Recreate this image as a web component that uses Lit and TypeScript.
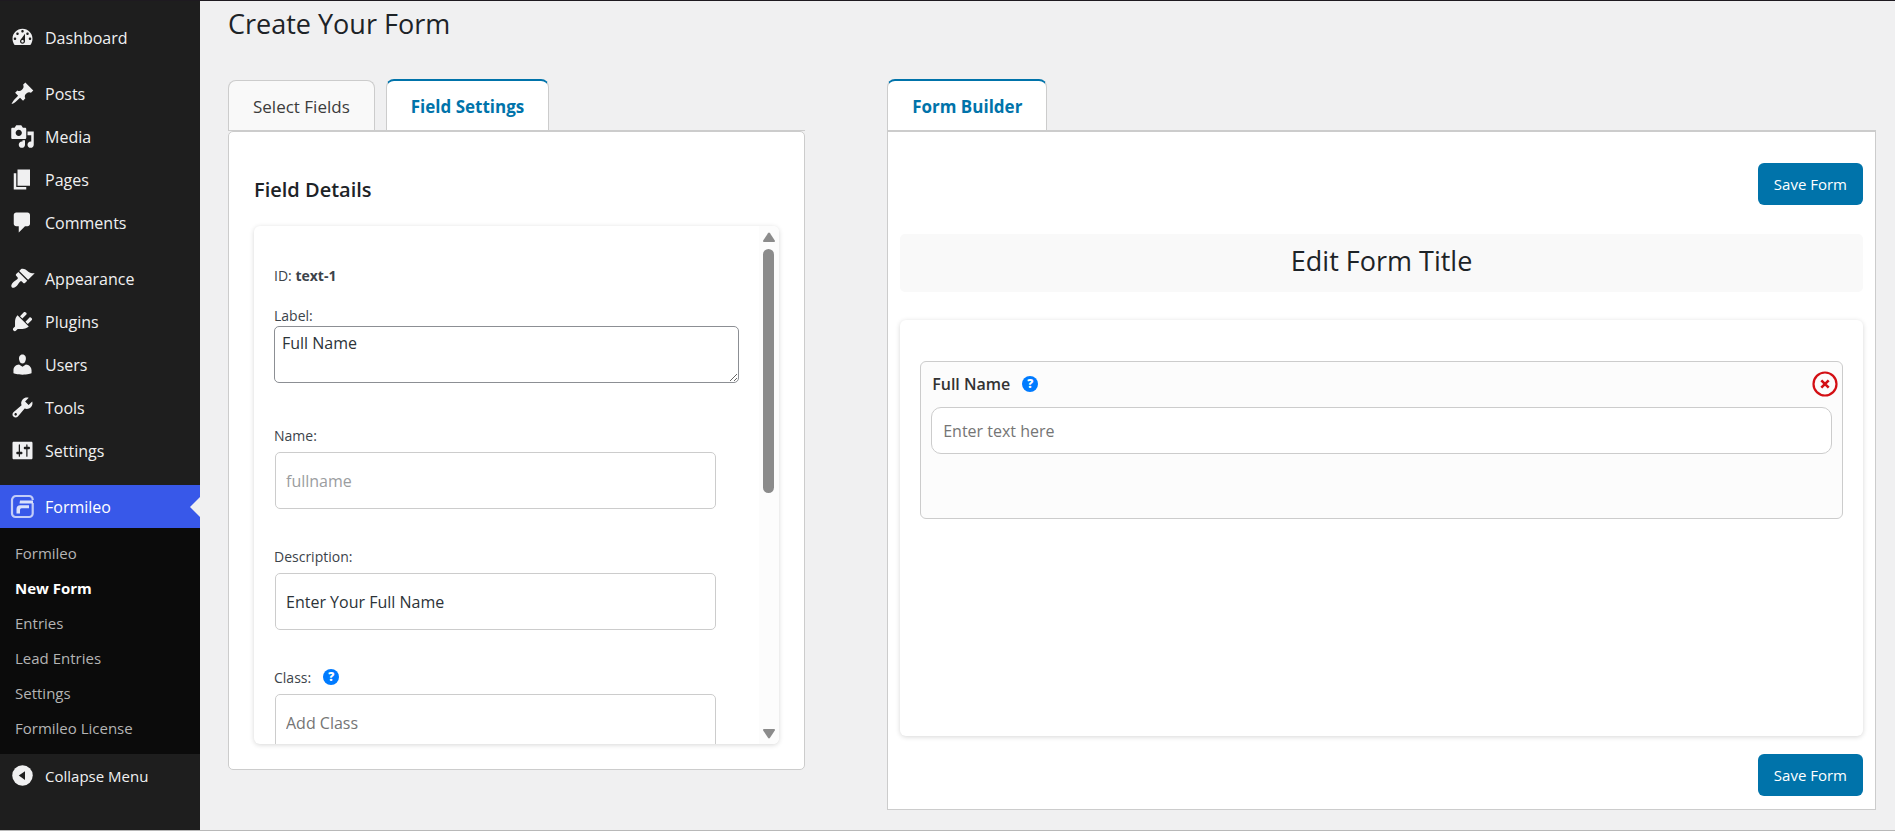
import { LitElement, html, css, svg } from "lit";
import { customElement, state } from "lit/decorators.js";
import { classMap } from "lit/directives/class-map.js";

interface MenuItem {
  label: string;
  path: string;
  first?: boolean;
}

const MENU: MenuItem[] = [
  {
    label: "Dashboard",
    path: "M3.76 16h12.48c1.1-1.37 1.76-3.11 1.76-5 0-4.42-3.58-8-8-8s-8 3.58-8 8c0 1.89.66 3.63 1.76 5zM10 4c.55 0 1 .45 1 1s-.45 1-1 1-1-.45-1-1 .45-1 1-1zM6 6c.55 0 1 .45 1 1s-.45 1-1 1-1-.45-1-1 .45-1 1-1zm8 0c.55 0 1 .45 1 1s-.45 1-1 1-1-.45-1-1 .45-1 1-1zm-5.37 5.55L12 7v6c0 1.1-.9 2-2 2s-2-.9-2-2c0-.57.24-1.08.63-1.45zM4 10c.55 0 1 .45 1 1s-.45 1-1 1-1-.45-1-1 .45-1 1-1zm12 0c.55 0 1 .45 1 1s-.45 1-1 1-1-.45-1-1 .45-1 1-1zm-5 3c0-.55-.45-1-1-1s-1 .45-1 1 .45 1 1 1 1-.45 1-1z",
  },
  {
    label: "Posts",
    first: true,
    path: "M10.44 3.02l1.82-1.82 6.36 6.35-1.83 1.82c-1.05-.68-2.48-.57-3.41.36l-.75.75c-.92.93-1.04 2.35-.35 3.41l-1.83 1.82-2.41-2.41-2.8 2.79c-.42.42-3.38 2.71-3.8 2.29s1.86-3.39 2.28-3.81l2.79-2.79L4.1 9.36l1.83-1.82c1.05.69 2.48.57 3.4-.36l.75-.75c.93-.92 1.05-2.35.36-3.41z",
  },
  {
    label: "Media",
    path: "M13 11V4c0-.55-.45-1-1-1h-1.67L9 1H5L3.67 3H2c-.55 0-1 .45-1 1v7c0 .55.45 1 1 1h10c.55 0 1-.45 1-1zM7 4.5c1.38 0 2.5 1.12 2.5 2.5S8.38 9.5 7 9.5 4.5 8.38 4.5 7 5.62 4.5 7 4.5zM14 6h5v10.5c0 1.38-1.12 2.5-2.5 2.5S14 17.88 14 16.5s1.12-2.5 2.5-2.5c.17 0 .34.02.5.05V9h-3V6zm-4 8.05V13h2v3.5c0 1.38-1.12 2.5-2.5 2.5S7 17.88 7 16.5 8.12 14 9.5 14c.17 0 .34.02.5.05z",
  },
  { label: "Pages", path: "M6 15V2h10v13H6zm-1 1h8v2H3V5h2v11z" },
  {
    label: "Comments",
    path: "M5 2h9c1.1 0 2 .9 2 2v7c0 1.1-.9 2-2 2h-2l-5 5v-5H5c-1.1 0-2-.9-2-2V4c0-1.1.9-2 2-2z",
  },
  {
    label: "Appearance",
    first: true,
    path: "M14.48 11.06L7.41 3.99l1.5-1.5c.5-.56 2.3-.47 3.51.32 1.21.8 1.43 1.28 2.91 2.1 1.18.64 2.45 1.26 4.45.85zm-.71.71L6.7 4.7 4.93 6.47c-.39.39-.39 1.02 0 1.41l1.06 1.06c.39.39.39 1.03 0 1.42-.6.6-1.43 1.11-2.21 1.69-.35.26-.7.53-1.01.84C1.43 14.23.4 16.08 1.4 17.07c.99 1 2.84-.03 4.18-1.36.31-.31.58-.66.85-1.02.57-.78 1.08-1.61 1.69-2.21.39-.39 1.02-.39 1.41 0l1.06 1.06c.39.39 1.02.39 1.41 0z",
  },
  {
    label: "Plugins",
    path: "M13.11 4.36L9.87 7.6 8 5.73l3.24-3.24c.35-.34 1.05-.2 1.56.32.52.51.66 1.21.31 1.55zm-8 1.77l.91-1.12 9.01 9.01-1.19.84c-.71.71-2.63 1.16-3.82 1.16H6.14L4.9 17.26c-.59.59-1.54.59-2.12 0-.59-.58-.59-1.53 0-2.12l1.24-1.24v-3.88c0-1.13.4-3.19 1.09-3.89zm7.26 3.97l3.24-3.24c.34-.35 1.04-.21 1.55.31.52.51.66 1.21.31 1.55l-3.24 3.25z",
  },
  {
    label: "Users",
    path: "M10 9.25c-2.27 0-2.73-3.44-2.73-3.44C7 4.02 7.82 2 9.97 2c2.16 0 2.98 2.02 2.71 3.81 0 0-.41 3.44-2.68 3.44zm0 2.57L12.72 10c2.39 0 4.52 2.33 4.52 4.53v2.49s-3.65 1.13-7.24 1.13c-3.65 0-7.24-1.13-7.24-1.13v-2.49c0-2.25 1.94-4.48 4.47-4.48z",
  },
  {
    label: "Tools",
    path: "M16.68 9.77c-1.34 1.34-3.3 1.67-4.95.99l-5.41 6.52c-.99.99-2.59.99-3.58 0s-.99-2.59 0-3.57l6.52-5.42c-.68-1.65-.35-3.61.99-4.95 1.28-1.28 3.12-1.62 4.72-1.06l-2.89 2.89 2.82 2.82 2.86-2.87c.53 1.58.18 3.39-1.08 4.65zM3.81 16.21c.4.39 1.04.39 1.43 0 .4-.4.4-1.04 0-1.43-.39-.4-1.03-.4-1.43 0-.39.39-.39 1.03 0 1.43z",
  },
  {
    label: "Settings",
    path: "M18 16V4c0-.55-.45-1-1-1H3c-.55 0-1 .45-1 1v12c0 .55.45 1 1 1h14c.55 0 1-.45 1-1zM8 11h1c.55 0 1 .45 1 1s-.45 1-1 1H8v1.5c0 .28-.22.5-.5.5s-.5-.22-.5-.5V13H6c-.55 0-1-.45-1-1s.45-1 1-1h1V5.5c0-.28.22-.5.5-.5s.5.22.5.5V11zm5-2h-1c-.55 0-1-.45-1-1s.45-1 1-1h1V5.5c0-.28.22-.5.5-.5s.5.22.5.5V7h1c.55 0 1 .45 1 1s-.45 1-1 1h-1v5.5c0 .28-.22.5-.5.5s-.5-.22-.5-.5V9z",
  },
];

const SUBMENU = ["Formileo", "New Form", "Entries", "Lead Entries", "Settings", "Formileo License"];

const shared = css`
  *,
  *::before,
  *::after {
    box-sizing: border-box;
  }
  a {
    color: inherit;
    text-decoration: none;
  }
  button,
  input,
  textarea {
    font-family: inherit;
    margin: 0;
  }
`;

@customElement("admin-menu")
export class AdminMenu extends LitElement {
  static styles = [
    shared,
    css`
      :host {
        display: block;
        background: #1e1e1e;
        color: #f0f0f1;
        padding-top: 15px;
        font-size: 16px;
      }
      .list {
        list-style: none;
        margin: 0;
        padding: 0;
      }
      .first {
        margin-top: 13px;
      }
      .item {
        display: flex;
        align-items: center;
        gap: 10px;
        width: 100%;
        height: 43px;
        padding: 0 10px;
        border: 0;
        background: none;
        color: inherit;
        text-align: left;
      }
      .icon {
        flex: none;
        width: 25px;
        height: 25px;
        fill: #f0f0f1;
      }
      .current {
        position: relative;
        background: #3858e9;
        color: #fff;
      }
      .current::after {
        content: "";
        position: absolute;
        right: 0;
        top: 50%;
        margin-top: -10px;
        border: 10px solid transparent;
        border-left-width: 0;
        border-right-color: #f0f0f1;
      }
      .sub {
        list-style: none;
        margin: 0;
        padding: 8px 0;
        background: #0b0b0b;
        color: #b4b4b4;
        font-size: 15px;
      }
      .sub-link {
        display: block;
        padding: 0 15px;
        line-height: 35px;
      }
      .active {
        color: #fff;
        font-weight: 700;
      }
      .collapse {
        font-size: 15px;
      }
    `,
  ];

  render() {
    return html`
      <nav aria-label="Main menu">
        <ul class="list">
          ${MENU.map(
            (m) => html`<li class=${classMap({ first: !!m.first })}>
              <a class="item" href="#">
                <svg class="icon" viewBox="0 0 20 20" aria-hidden="true">${svg`<path fill-rule="evenodd" d=${m.path} />`}</svg>
                <span>${m.label}</span>
              </a>
            </li>`
          )}
          <li class="first">
            <a class="item current" href="#">
              <svg class="icon" viewBox="0 0 25 25" aria-hidden="true">
                <path
                  d="M22.700 6V5.500a3.500 3.500 0 0 0-3.500-3.500H6a4 4 0 0 0-4 4v13.500a3.500 3.500 0 0 0 3.500 3.500h13.700a3.500 3.500 0 0 0 3.500-3.500V9"
                  fill="none"
                  stroke="#c3cdf8"
                  stroke-width="2.200"
                />
                <path d="M10 6.500h13v3H9.500z" fill="#dbe1fb" />
                <path d="M6.500 19.500V15a3.800 3.800 0 0 1 3.800-3.800H19v3h-7.500a1.500 1.500 0 0 0-1.500 1.500v3.800z" fill="#dbe1fb" />
              </svg>
              <span>Formileo</span>
            </a>
            <ul class="sub">
              ${SUBMENU.map(
                (s) => html`<li>
                  <a class=${classMap({ "sub-link": true, active: s === "New Form" })} href="#">${s}</a>
                </li>`
              )}
            </ul>
          </li>
        </ul>
        <button class="item collapse" type="button">
          <svg class="icon" viewBox="0 0 20 20" aria-hidden="true">
            <circle cx="10" cy="10" r="8.200" />
            <path d="M12 6.500v7L7 10z" fill="#1e1e1e" />
          </svg>
          <span>Collapse Menu</span>
        </button>
      </nav>
    `;
  }
}

@customElement("help-tip")
export class HelpTip extends LitElement {
  static styles = [
    shared,
    css`
      :host {
        display: inline-flex;
      }
      .tip {
        width: 16px;
        height: 16px;
        padding: 0;
        border: 0;
        border-radius: 50%;
        background: #007bff;
        color: #fff;
        font-size: 12px;
        font-weight: 800;
        line-height: 16px;
        text-align: center;
      }
    `,
  ];
  render() {
    return html`<button class="tip" type="button" aria-label="Help">?</button>`;
  }
}

@customElement("field-settings")
export class FieldSettings extends LitElement {
  static styles = [
    shared,
    css`
      :host {
        display: block;
      }
      .card {
        display: flex;
        height: 518px;
        border-radius: 6px;
        box-shadow: 0 1px 5px rgba(0, 0, 0, 0.16);
        overflow: hidden;
        background: #fff;
      }
      .scroller {
        flex: 1;
        overflow-y: auto;
        scrollbar-width: none;
        padding: 38px 20px 0;
        color: #3c434a;
        font-size: 14px;
      }
      .line {
        margin: 0 0 16px;
        line-height: 24px;
      }
      .group {
        display: grid;
        grid-template-columns: minmax(0, 1fr);
        height: 121px;
        grid-template-rows: 28px 57px;
      }
      .area-group {
        height: 120px;
        grid-template-rows: 22px 57px;
      }
      .caption {
        display: flex;
        align-items: center;
        gap: 12px;
        height: 22px;
      }
      .area,
      .text {
        background: #fff;
        color: #2c3338;
        font-size: 16px;
      }
      .area {
        width: 100%;
        height: 57px;
        padding: 3px 7px;
        border: 1px solid #8c8f94;
        border-radius: 5px;
        line-height: 26px;
      }
      .text {
        height: 57px;
        margin: 0 23px 0 1px;
        padding: 0 10px;
        border: 1px solid #ccc;
        border-radius: 5px;
      }
      .text::placeholder {
        color: #757575;
        opacity: 1;
      }
      .text:disabled {
        color: #9b9d9f;
      }
      .bar {
        flex: none;
        display: flex;
        flex-direction: column;
        align-items: center;
        width: 20px;
        padding: 6px 0 5px;
        background: #fcfcfc;
      }
      .arrow {
        flex: none;
        width: 12px;
        height: 10px;
        fill: #8b8b8b;
      }
      .track {
        flex: 1;
        width: 11px;
        margin: 7px 0;
      }
      .thumb {
        width: 11px;
        border-radius: 6px;
        background: #8b8b8b;
      }
    `,
  ];

  @state() private visible = 0.515;

  render() {
    return html`
      <div class="card">
        <div class="scroller">
          <p class="line">ID: <strong>text-1</strong></p>
          <div class="group area-group">
            <label class="caption" for="label">Label:</label>
            <textarea class="area" id="label" .value=${"Full Name"}></textarea>
          </div>
          <div class="group">
            <label class="caption" for="name">Name:</label>
            <input class="text" id="name" type="text" disabled .value=${"fullname"} />
          </div>
          <div class="group">
            <label class="caption" for="description">Description:</label>
            <input class="text" id="description" type="text" .value=${"Enter Your Full Name"} />
          </div>
          <div class="group">
            <div class="caption"><label for="class">Class:</label><help-tip></help-tip></div>
            <input class="text" id="class" type="text" placeholder="Add Class" />
          </div>
        </div>
        <div class="bar" aria-hidden="true">
          <svg class="arrow" viewBox="0 0 12 10"><path d="M5 1.200a1.200 1.200 0 0 1 2 0l4.800 7.300a1 1 0 0 1-.8 1.500H1a1 1 0 0 1-.8-1.500z" /></svg>
          <div class="track"><div class="thumb" style="height:${this.visible * 100}%"></div></div>
          <svg class="arrow" viewBox="0 0 12 10"><path d="M5 8.800a1.200 1.200 0 0 0 2 0l4.800-7.300a1 1 0 0 0-.8-1.500H1a1 1 0 0 0-.8 1.500z" /></svg>
        </div>
      </div>
    `;
  }
}

@customElement("form-canvas")
export class FormCanvas extends LitElement {
  static styles = [
    shared,
    css`
      :host {
        display: block;
      }
      .title {
        margin: 0;
        padding: 8px 0 12px;
        border-radius: 5px;
        background: #f9f9f9;
        color: #1d2327;
        font-size: 27px;
        font-weight: 400;
        line-height: 38px;
        text-align: center;
      }
      .canvas {
        min-height: 416px;
        margin-top: 28px;
        padding: 41px 20px;
        border-radius: 6px;
        box-shadow: 0 1px 5px rgba(0, 0, 0, 0.16);
        background: #fff;
      }
      .field {
        min-height: 158px;
        padding: 9px 10px;
        border: 1px solid #ccc;
        border-radius: 6px;
        background: #fcfcfc;
      }
      .head {
        display: flex;
        align-items: center;
        height: 25px;
        margin: 0 -6px 11px 1px;
        gap: 12px;
        color: #333;
        font-size: 16px;
        font-weight: 600;
      }
      .remove {
        display: block;
        width: 26px;
        height: 26px;
        margin-left: auto;
        padding: 0;
        border: 0;
        background: none;
      }
      .cross {
        display: block;
        width: 26px;
        height: 26px;
        fill: none;
        stroke: #d30f14;
      }
      .entry {
        display: block;
        width: 100%;
        height: 47px;
        padding: 0 11px;
        border: 1px solid #ccc;
        border-radius: 10px;
        background: #fff;
        color: #2c3338;
        font-size: 16px;
      }
      .entry::placeholder {
        color: #757575;
        opacity: 1;
      }
    `,
  ];
  render() {
    return html`
      <h2 class="title">Edit Form Title</h2>
      <div class="canvas">
        <div class="field">
          <div class="head">
            <label for="entry">Full Name</label><help-tip></help-tip>
            <button class="remove" type="button" aria-label="Remove field">
              <svg class="cross" viewBox="0 0 26 26">
                <circle cx="13" cy="13" r="11.500" stroke-width="2.200" />
                <path d="M9.300 9.300l7.400 7.400M16.700 9.300l-7.400 7.400" stroke-width="2.600" />
              </svg>
            </button>
          </div>
          <input class="entry" id="entry" type="text" placeholder="Enter text here" />
        </div>
      </div>
    `;
  }
}

@customElement("app-root")
export class AppRoot extends LitElement {
  static styles = [
    shared,
    css`
      :host {
        display: grid;
        grid-template-columns: 200px minmax(0, 1fr);
        box-sizing: border-box;
        min-height: 100vh;
        border-top: 1px solid #1e1a20;
        border-bottom: 1px solid #b8b8b8;
        background: #f0f0f1;
        color: #1d2327;
        font-family: "Segoe UI", "Open Sans", "Noto Sans", sans-serif;
      }
      .main {
        padding: 4px 19px 0 28px;
      }
      .page-title {
        margin: 0;
        font-size: 27px;
        font-weight: 400;
        line-height: 38px;
      }
      .columns {
        display: grid;
        grid-template-columns: 35fr 60fr;
        column-gap: 5%;
        align-items: start;
        margin-top: 35px;
      }
      .tabs {
        display: flex;
        align-items: flex-end;
        gap: 11px;
        height: 53px;
        border-bottom: 1px solid #ccc;
      }
      .tab {
        height: 50px;
        padding: 2px 24px 0;
        border: 1px solid #ccc;
        border-bottom: 0;
        border-radius: 8px 8px 0 0;
        background: #f9f9f9;
        color: #3c3c3c;
        font-size: 17px;
      }
      .selected {
        height: 51px;
        border-top: 2px solid #0073aa;
        background: #fff;
        color: #0073aa;
        font-weight: 700;
      }
      .panel {
        border: 1px solid #ccc;
        background: #fff;
      }
      .settings {
        padding: 43px 25px 25px;
        border-radius: 5px;
      }
      .heading {
        margin: 0 0 21px;
        font-size: 20px;
        font-weight: 600;
        line-height: 30px;
      }
      .builder {
        display: flex;
        flex-direction: column;
        padding: 31px 12px 13px;
      }
      .save {
        align-self: flex-end;
        height: 42px;
        padding: 0 16px;
        border: 0;
        border-radius: 6px;
        background: #0073aa;
        color: #fff;
        font-size: 15px;
      }
      .form {
        margin: 29px 0 18px;
      }
    `,
  ];

  render() {
    return html`
      <admin-menu></admin-menu>
      <main class="main">
        <h1 class="page-title">Create Your Form</h1>
        <div class="columns">
          <section>
            <div class="tabs" role="tablist">
              <button class="tab" type="button" role="tab" aria-selected="false">Select Fields</button>
              <button class="tab selected" type="button" role="tab" aria-selected="true">Field Settings</button>
            </div>
            <div class="panel settings">
              <h2 class="heading">Field Details</h2>
              <field-settings></field-settings>
            </div>
          </section>
          <section>
            <div class="tabs" role="tablist">
              <button class="tab selected" type="button" role="tab" aria-selected="true">Form Builder</button>
            </div>
            <div class="panel builder">
              <button class="save" type="button">Save Form</button>
              <form-canvas class="form"></form-canvas>
              <button class="save" type="button">Save Form</button>
            </div>
          </section>
        </div>
      </main>
    `;
  }
}
